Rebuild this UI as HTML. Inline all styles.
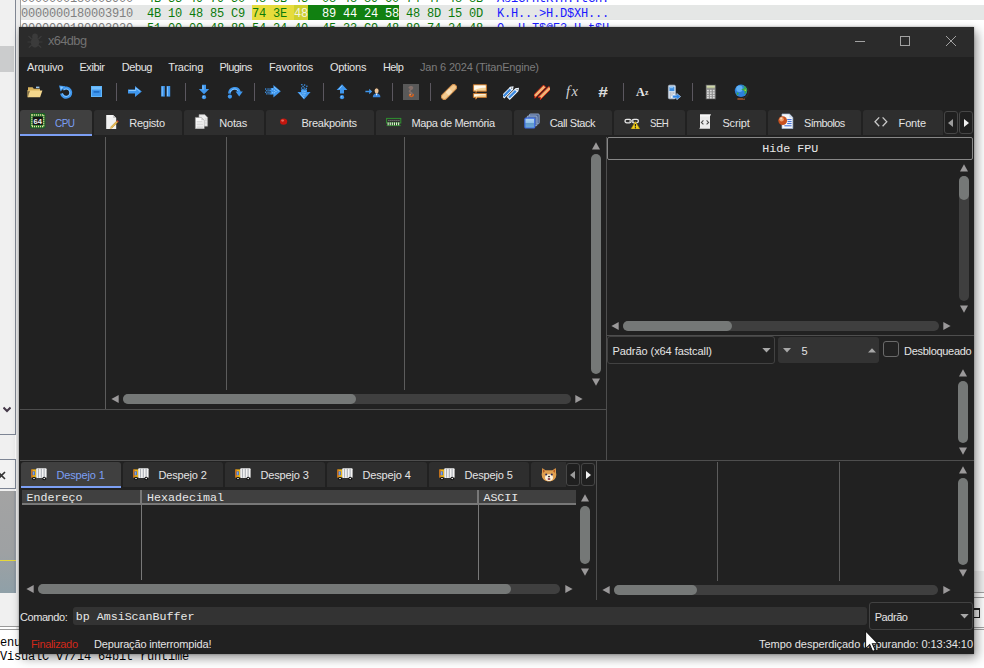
<!DOCTYPE html>
<html lang="pt"><head><meta charset="utf-8"><title>x64dbg</title>
<style>
html,body{margin:0;padding:0}
body{width:984px;height:668px;position:relative;overflow:hidden;background:#fff;font-family:"Liberation Sans",sans-serif}
.r{position:absolute;display:block;box-sizing:border-box}
.t{position:absolute;white-space:pre;line-height:16px;display:block}
</style></head><body>
<div class="r" style="left:0px;top:0px;width:15px;height:626px;background:#f0f0f0;"></div>
<div class="r" style="left:0px;top:46px;width:14px;height:26px;background:#cbcccd;"></div>
<div class="r" style="left:15px;top:0px;width:1px;height:435px;background:#808692;"></div>
<div class="r" style="left:16px;top:0px;width:4px;height:668px;background:#ececec;"></div>
<div class="r" style="left:20px;top:0px;width:1px;height:30px;background:#a0a0a0;"></div>
<div class="r" style="left:21px;top:5px;width:963px;height:15px;background:#e5e7e6;"></div>
<div class="r" style="left:252px;top:5px;width:42px;height:15px;background:#e6dc3c;"></div>
<div class="r" style="left:294px;top:5px;width:14px;height:15px;background:#ced02e;"></div>
<div class="r" style="left:308px;top:5px;width:91px;height:15px;background:#118011;"></div>
<span class="t" id="t0" style="left:21px;top:-9.19px;font-family:'Liberation Mono', monospace;font-size:12px;color:#808080;letter-spacing:-0.201px;">0000000180003900</span>
<span class="t" id="t1" style="left:147px;top:-9.19px;font-family:'Liberation Mono', monospace;font-size:12px;color:#0a7a0a;letter-spacing:-0.201px;">4B</span>
<span class="t" id="t2" style="left:168px;top:-9.19px;font-family:'Liberation Mono', monospace;font-size:12px;color:#0a7a0a;letter-spacing:-0.201px;">33</span>
<span class="t" id="t3" style="left:189px;top:-9.19px;font-family:'Liberation Mono', monospace;font-size:12px;color:#0a7a0a;letter-spacing:-0.201px;">49</span>
<span class="t" id="t4" style="left:210px;top:-9.19px;font-family:'Liberation Mono', monospace;font-size:12px;color:#0a7a0a;letter-spacing:-0.201px;">79</span>
<span class="t" id="t5" style="left:231px;top:-9.19px;font-family:'Liberation Mono', monospace;font-size:12px;color:#0a7a0a;letter-spacing:-0.201px;">50</span>
<span class="t" id="t6" style="left:252px;top:-9.19px;font-family:'Liberation Mono', monospace;font-size:12px;color:#0a7a0a;letter-spacing:-0.201px;">48</span>
<span class="t" id="t7" style="left:273px;top:-9.19px;font-family:'Liberation Mono', monospace;font-size:12px;color:#0a7a0a;letter-spacing:-0.201px;">8B</span>
<span class="t" id="t8" style="left:294px;top:-9.19px;font-family:'Liberation Mono', monospace;font-size:12px;color:#0a7a0a;letter-spacing:-0.201px;">43</span>
<span class="t" id="t9" style="left:322px;top:-9.19px;font-family:'Liberation Mono', monospace;font-size:12px;color:#0a7a0a;letter-spacing:-0.201px;">08</span>
<span class="t" id="t10" style="left:343px;top:-9.19px;font-family:'Liberation Mono', monospace;font-size:12px;color:#0a7a0a;letter-spacing:-0.201px;">48</span>
<span class="t" id="t11" style="left:364px;top:-9.19px;font-family:'Liberation Mono', monospace;font-size:12px;color:#0a7a0a;letter-spacing:-0.201px;">89</span>
<span class="t" id="t12" style="left:385px;top:-9.19px;font-family:'Liberation Mono', monospace;font-size:12px;color:#0a7a0a;letter-spacing:-0.201px;">C0</span>
<span class="t" id="t13" style="left:406px;top:-9.19px;font-family:'Liberation Mono', monospace;font-size:12px;color:#0a7a0a;letter-spacing:-0.201px;">74</span>
<span class="t" id="t14" style="left:427px;top:-9.19px;font-family:'Liberation Mono', monospace;font-size:12px;color:#0a7a0a;letter-spacing:-0.201px;">47</span>
<span class="t" id="t15" style="left:448px;top:-9.19px;font-family:'Liberation Mono', monospace;font-size:12px;color:#0a7a0a;letter-spacing:-0.201px;">48</span>
<span class="t" id="t16" style="left:469px;top:-9.19px;font-family:'Liberation Mono', monospace;font-size:12px;color:#0a7a0a;letter-spacing:-0.201px;">8B</span>
<span class="t" id="t17" style="left:497px;top:-9.19px;font-family:'Liberation Mono', monospace;font-size:12px;color:#1a1aff;letter-spacing:-0.201px;">AsiGrHtK.H..tGH.</span>
<span class="t" id="t18" style="left:21px;top:5.81px;font-family:'Liberation Mono', monospace;font-size:12px;color:#808080;letter-spacing:-0.201px;">0000000180003910</span>
<span class="t" id="t19" style="left:147px;top:5.81px;font-family:'Liberation Mono', monospace;font-size:12px;color:#0a7a0a;letter-spacing:-0.201px;">4B</span>
<span class="t" id="t20" style="left:168px;top:5.81px;font-family:'Liberation Mono', monospace;font-size:12px;color:#0a7a0a;letter-spacing:-0.201px;">10</span>
<span class="t" id="t21" style="left:189px;top:5.81px;font-family:'Liberation Mono', monospace;font-size:12px;color:#0a7a0a;letter-spacing:-0.201px;">48</span>
<span class="t" id="t22" style="left:210px;top:5.81px;font-family:'Liberation Mono', monospace;font-size:12px;color:#0a7a0a;letter-spacing:-0.201px;">85</span>
<span class="t" id="t23" style="left:231px;top:5.81px;font-family:'Liberation Mono', monospace;font-size:12px;color:#0a7a0a;letter-spacing:-0.201px;">C9</span>
<span class="t" id="t24" style="left:252px;top:5.81px;font-family:'Liberation Mono', monospace;font-size:12px;color:#0a7a0a;letter-spacing:-0.201px;">74</span>
<span class="t" id="t25" style="left:273px;top:5.81px;font-family:'Liberation Mono', monospace;font-size:12px;color:#0a7a0a;letter-spacing:-0.201px;">3E</span>
<span class="t" id="t26" style="left:294px;top:5.81px;font-family:'Liberation Mono', monospace;font-size:12px;color:#f4f4e0;letter-spacing:-0.201px;">48</span>
<span class="t" id="t27" style="left:322px;top:5.81px;font-family:'Liberation Mono', monospace;font-size:12px;color:#ffffff;letter-spacing:-0.201px;">89</span>
<span class="t" id="t28" style="left:343px;top:5.81px;font-family:'Liberation Mono', monospace;font-size:12px;color:#ffffff;letter-spacing:-0.201px;">44</span>
<span class="t" id="t29" style="left:364px;top:5.81px;font-family:'Liberation Mono', monospace;font-size:12px;color:#ffffff;letter-spacing:-0.201px;">24</span>
<span class="t" id="t30" style="left:385px;top:5.81px;font-family:'Liberation Mono', monospace;font-size:12px;color:#ffffff;letter-spacing:-0.201px;">58</span>
<span class="t" id="t31" style="left:406px;top:5.81px;font-family:'Liberation Mono', monospace;font-size:12px;color:#0a7a0a;letter-spacing:-0.201px;">48</span>
<span class="t" id="t32" style="left:427px;top:5.81px;font-family:'Liberation Mono', monospace;font-size:12px;color:#0a7a0a;letter-spacing:-0.201px;">8D</span>
<span class="t" id="t33" style="left:448px;top:5.81px;font-family:'Liberation Mono', monospace;font-size:12px;color:#0a7a0a;letter-spacing:-0.201px;">15</span>
<span class="t" id="t34" style="left:469px;top:5.81px;font-family:'Liberation Mono', monospace;font-size:12px;color:#0a7a0a;letter-spacing:-0.201px;">0D</span>
<span class="t" id="t35" style="left:497px;top:5.81px;font-family:'Liberation Mono', monospace;font-size:12px;color:#1a1aff;letter-spacing:-0.201px;">K.H...&gt;H.D$XH...</span>
<span class="t" id="t36" style="left:21px;top:20.81px;font-family:'Liberation Mono', monospace;font-size:12px;color:#808080;letter-spacing:-0.201px;">0000000180003920</span>
<span class="t" id="t37" style="left:147px;top:20.81px;font-family:'Liberation Mono', monospace;font-size:12px;color:#0a7a0a;letter-spacing:-0.201px;">51</span>
<span class="t" id="t38" style="left:168px;top:20.81px;font-family:'Liberation Mono', monospace;font-size:12px;color:#0a7a0a;letter-spacing:-0.201px;">00</span>
<span class="t" id="t39" style="left:189px;top:20.81px;font-family:'Liberation Mono', monospace;font-size:12px;color:#0a7a0a;letter-spacing:-0.201px;">00</span>
<span class="t" id="t40" style="left:210px;top:20.81px;font-family:'Liberation Mono', monospace;font-size:12px;color:#0a7a0a;letter-spacing:-0.201px;">48</span>
<span class="t" id="t41" style="left:231px;top:20.81px;font-family:'Liberation Mono', monospace;font-size:12px;color:#0a7a0a;letter-spacing:-0.201px;">89</span>
<span class="t" id="t42" style="left:252px;top:20.81px;font-family:'Liberation Mono', monospace;font-size:12px;color:#0a7a0a;letter-spacing:-0.201px;">54</span>
<span class="t" id="t43" style="left:273px;top:20.81px;font-family:'Liberation Mono', monospace;font-size:12px;color:#0a7a0a;letter-spacing:-0.201px;">24</span>
<span class="t" id="t44" style="left:294px;top:20.81px;font-family:'Liberation Mono', monospace;font-size:12px;color:#0a7a0a;letter-spacing:-0.201px;">40</span>
<span class="t" id="t45" style="left:322px;top:20.81px;font-family:'Liberation Mono', monospace;font-size:12px;color:#0a7a0a;letter-spacing:-0.201px;">45</span>
<span class="t" id="t46" style="left:343px;top:20.81px;font-family:'Liberation Mono', monospace;font-size:12px;color:#0a7a0a;letter-spacing:-0.201px;">33</span>
<span class="t" id="t47" style="left:364px;top:20.81px;font-family:'Liberation Mono', monospace;font-size:12px;color:#0a7a0a;letter-spacing:-0.201px;">C9</span>
<span class="t" id="t48" style="left:385px;top:20.81px;font-family:'Liberation Mono', monospace;font-size:12px;color:#0a7a0a;letter-spacing:-0.201px;">48</span>
<span class="t" id="t49" style="left:406px;top:20.81px;font-family:'Liberation Mono', monospace;font-size:12px;color:#0a7a0a;letter-spacing:-0.201px;">89</span>
<span class="t" id="t50" style="left:427px;top:20.81px;font-family:'Liberation Mono', monospace;font-size:12px;color:#0a7a0a;letter-spacing:-0.201px;">74</span>
<span class="t" id="t51" style="left:448px;top:20.81px;font-family:'Liberation Mono', monospace;font-size:12px;color:#0a7a0a;letter-spacing:-0.201px;">24</span>
<span class="t" id="t52" style="left:469px;top:20.81px;font-family:'Liberation Mono', monospace;font-size:12px;color:#0a7a0a;letter-spacing:-0.201px;">48</span>
<span class="t" id="t53" style="left:497px;top:20.81px;font-family:'Liberation Mono', monospace;font-size:12px;color:#1a1aff;letter-spacing:-0.201px;">Q..H.T$@E3.H.t$H</span>
<svg class="r" style="left:3px;top:405.5px;" width="8" height="8" viewBox="0 0 8 8"><path d="M0.5 1.5L4 5l3.5-3.5" fill="none" stroke="#443848" stroke-width="2"/></svg>
<div class="r" style="left:0px;top:420px;width:16px;height:15px;background:transparent;border-right:1px solid #7d8594;border-bottom:1px solid #7d8594"></div>
<div class="r" style="left:-2px;top:459px;width:18px;height:30px;background:#f2f2f2;border:1px solid #7d8594"></div>
<svg class="r" style="left:-3px;top:470.5px;" width="9" height="9" viewBox="0 0 9 9"><path d="M1 1l7 7M8 1l-7 7" stroke="#333" stroke-width="1.6"/></svg>
<div class="r" style="left:0px;top:491px;width:16px;height:102px;background:linear-gradient(180deg,#a3a3a3 0%,#9ea1a3 60%,#8fa0a8 100%);"></div>
<div class="r" style="left:14px;top:491px;width:2px;height:102px;background:rgba(120,130,150,.25);"></div>
<div class="r" style="left:0px;top:560px;width:16px;height:1px;background:#e6d83a;"></div>
<div class="r" style="left:0px;top:593px;width:20px;height:33px;background:#f0f0f0;"></div>
<div class="r" style="left:0px;top:626px;width:20px;height:1px;background:#9a9a9a;"></div>
<div class="r" style="left:0px;top:629px;width:20px;height:1px;background:#9a9a9a;"></div>
<div class="r" style="left:0px;top:630px;width:20px;height:38px;background:#ffffff;"></div>
<span class="t" id="t54" style="left:0px;top:634.81px;font-family:'Liberation Mono', monospace;font-size:12px;color:#000;letter-spacing:-0.201px;">enu</span>
<span class="t" id="t55" style="left:0px;top:648.81px;font-family:'Liberation Mono', monospace;font-size:12px;color:#000;letter-spacing:-0.201px;">VisualC v7/14 64bit runtime</span>
<div class="r" style="left:974px;top:571px;width:10px;height:21px;background:#f0f0f0;"></div>
<div class="r" style="left:974px;top:592px;width:10px;height:1px;background:#a3a3a3;"></div>
<div class="r" style="left:974px;top:597px;width:10px;height:1px;background:#a3a3a3;"></div>
<div class="r" style="left:974px;top:627px;width:10px;height:1px;background:#a3a3a3;"></div>
<div class="r" style="left:974px;top:629px;width:10px;height:1px;background:#a3a3a3;"></div>
<div class="r" style="left:974px;top:608px;width:6px;height:10px;background:#f0f0f0;border:1px solid #222;border-top:2px solid #222;border-left:none"></div>
<div class="r" id="win" style="left:19px;top:27px;width:955px;height:627px;background:#212121;box-shadow:3px 4px 10px rgba(0,0,0,.42),0 0 2px rgba(0,0,0,.35)"></div>
<div class="r" style="left:19px;top:27px;width:955px;height:30px;background:#2b2b2b;"></div>
<svg class="r" style="left:27px;top:33px;" width="16" height="15" viewBox="0 0 16 15"><g fill="#3b3b3b" stroke="#3b3b3b"><ellipse cx="8" cy="9.2" rx="4.2" ry="5.2" stroke="none"/><circle cx="8" cy="3.4" r="2.8" stroke="none"/><path d="M4.5 6L1.5 3M11.5 6l3-3M4.4 9H0.5M11.6 9h3.9M4.8 12l-3 2.6M11.2 12l3 2.6" fill="none" stroke-width="1.2"/></g></svg>
<span class="t" id="t56" style="left:48px;top:33.49px;font-family:'Liberation Sans', sans-serif;font-size:13px;color:#727272;letter-spacing:-0.600px;transform:scaleX(0.9835);transform-origin:0 0;">x64dbg</span>
<svg class="r" style="left:855px;top:36px;" width="110" height="11" viewBox="0 0 110 11"><g fill="none" stroke="#a2a2a2" stroke-width="1"><path d="M0 5.5h10"/><rect x="45.5" y="0.5" width="9" height="9"/><path d="M91 0l10 10M101 0l-10 10"/></g></svg>
<span class="t" id="t57" style="left:27px;top:59.19px;font-family:'Liberation Sans', sans-serif;font-size:11px;color:#e4e4e4;letter-spacing:-0.149px;">Arquivo</span>
<span class="t" id="t58" style="left:79.4px;top:59.19px;font-family:'Liberation Sans', sans-serif;font-size:11px;color:#e4e4e4;letter-spacing:-0.403px;">Exibir</span>
<span class="t" id="t59" style="left:121.7px;top:59.19px;font-family:'Liberation Sans', sans-serif;font-size:11px;color:#e4e4e4;letter-spacing:-0.405px;">Debug</span>
<span class="t" id="t60" style="left:168.3px;top:59.19px;font-family:'Liberation Sans', sans-serif;font-size:11px;color:#e4e4e4;letter-spacing:-0.214px;">Tracing</span>
<span class="t" id="t61" style="left:219.5px;top:59.19px;font-family:'Liberation Sans', sans-serif;font-size:11px;color:#e4e4e4;letter-spacing:-0.563px;">Plugins</span>
<span class="t" id="t62" style="left:268.9px;top:59.19px;font-family:'Liberation Sans', sans-serif;font-size:11px;color:#e4e4e4;letter-spacing:-0.119px;">Favoritos</span>
<span class="t" id="t63" style="left:329.9px;top:59.19px;font-family:'Liberation Sans', sans-serif;font-size:11px;color:#e4e4e4;letter-spacing:-0.237px;">Options</span>
<span class="t" id="t64" style="left:382.5px;top:59.19px;font-family:'Liberation Sans', sans-serif;font-size:11px;color:#e4e4e4;letter-spacing:-0.600px;transform:scaleX(0.9988);transform-origin:0 0;">Help</span>
<span class="t" id="t65" style="left:420px;top:59.19px;font-family:'Liberation Sans', sans-serif;font-size:11px;color:#7c7c7c;letter-spacing:-0.179px;">Jan 6 2024 (TitanEngine)</span>
<div class="r" style="left:116px;top:83px;width:1px;height:18px;background:#5b575f;"></div>
<div class="r" style="left:185px;top:83px;width:1px;height:18px;background:#5b575f;"></div>
<div class="r" style="left:254px;top:83px;width:1px;height:18px;background:#5b575f;"></div>
<div class="r" style="left:323px;top:83px;width:1px;height:18px;background:#5b575f;"></div>
<div class="r" style="left:392px;top:83px;width:1px;height:18px;background:#5b575f;"></div>
<div class="r" style="left:430px;top:83px;width:1px;height:18px;background:#5b575f;"></div>
<div class="r" style="left:623px;top:83px;width:1px;height:18px;background:#5b575f;"></div>
<div class="r" style="left:692px;top:83px;width:1px;height:18px;background:#5b575f;"></div>
<svg class="r" style="left:27px;top:84px;" width="16" height="16" viewBox="0 0 16 16"><path d="M1 3.2h4.6l1.2 1.6H13v2.4H1z" fill="#d9b45e"/><path d="M9 2.6h3.4v1.6H9z" fill="#9fc6ec"/><path d="M2.8 6.6H15.4l-2.3 6.6H0.8z" fill="#f3d68c"/><path d="M1 6v7.2" stroke="#e6c473" stroke-width="1"/></svg>
<svg class="r" style="left:58px;top:84px;" width="16" height="16" viewBox="0 0 16 16"><path d="M5 5.300A4.600 4.600 0 1 1 3.600 9.400" fill="none" stroke="#3f97ee" stroke-width="3"/><path d="M5.600 5.900A3.800 3.800 0 1 1 4.400 9.400" fill="none" stroke="#8ccaff" stroke-width="0.900"/><path d="M1 1.400l6.600 0.800-5 5.400z" fill="#3f97ee"/><path d="M2.200 2.600l3.200 0.400-2.600 2.800z" fill="#8ccaff"/></svg>
<svg class="r" style="left:89px;top:84px;" width="16" height="16" viewBox="0 0 16 16"><rect x="2.5" y="2.5" width="10" height="10" fill="#3f97ee" stroke="#5fb6fc" stroke-width="1"/><rect x="3" y="3" width="9" height="2.6" fill="#74c0ff"/><rect x="4.6" y="7" width="5.800" height="1.800" fill="#1f6fc8"/></svg>
<svg class="r" style="left:127px;top:84px;" width="16" height="16" viewBox="0 0 16 16"><path d="M1 5.600h7V2l6.800 5.500L8 13V9.400H1z" fill="#3f97ee"/><path d="M1.800 6.500h7V4l4.200 3.400" fill="none" stroke="#8ccaff" stroke-width="1"/></svg>
<svg class="r" style="left:158px;top:84px;" width="16" height="16" viewBox="0 0 16 16"><rect x="3.200" y="2" width="3.600" height="10.600" fill="#3f97ee"/><rect x="8.600" y="2" width="3.600" height="10.600" fill="#3f97ee"/><path d="M4.200 2.600v9.400M9.600 2.600v9.400" stroke="#8ccaff" stroke-width="0.900"/></svg>
<svg class="r" style="left:196px;top:84px;" width="16" height="16" viewBox="0 0 16 16"><path d="M6 0.800h4v4.200h3.200L8 10.200 2.800 5H6z" fill="#3f97ee"/><path d="M7 1.600v4.200" stroke="#8ccaff"/><circle cx="8" cy="13.200" r="2.100" fill="#3f97ee"/><circle cx="7.600" cy="12.800" r="0.800" fill="#8ccaff"/></svg>
<svg class="r" style="left:227px;top:84px;" width="16" height="16" viewBox="0 0 16 16"><path d="M2.400 9.600C2.800 3.600 11 2.400 12.400 8.200" fill="none" stroke="#3f97ee" stroke-width="2.800"/><path d="M8.600 7.600h7.200l-3.600 5z" fill="#3f97ee"/><circle cx="2.900" cy="12.600" r="2.100" fill="#3f97ee"/><path d="M3.400 8C4.600 4.400 9.600 4 11 7" fill="none" stroke="#8ccaff" stroke-width="0.900"/></svg>
<svg class="r" style="left:265px;top:84px;" width="16" height="16" viewBox="0 0 16 16"><path d="M8.400 1l7.400 6.200-7.400 6.200V10.400H6V4h2.400z" fill="#3f97ee"/><path d="M9.200 3.200l4.800 4" stroke="#8ccaff" stroke-width="1" fill="none"/><g fill="#3f97ee"><rect x="0" y="4.4" width="1.3" height="1.3"/><rect x="2.4" y="4.4" width="1.3" height="1.3"/><rect x="4.4" y="4.4" width="1.3" height="1.3"/><rect x="1.2" y="6" width="1.3" height="1.3"/><rect x="3.4" y="6" width="1.3" height="1.3"/><rect x="5" y="6" width="1.3" height="1.3"/><rect x="0" y="7.6" width="1.3" height="1.3"/><rect x="2.4" y="7.6" width="1.3" height="1.3"/><rect x="4.4" y="7.6" width="1.3" height="1.3"/><rect x="1.2" y="9.2" width="1.3" height="1.3"/><rect x="3.4" y="9.2" width="1.3" height="1.3"/><rect x="5" y="9.2" width="1.3" height="1.3"/><rect x="6.4" y="5.2" width="1.3" height="1.3"/><rect x="6.4" y="7.4" width="1.3" height="1.3"/><rect x="7.8" y="6.4" width="1.3" height="1.3"/></g><g fill="#8ccaff"><rect x="7" y="4.6" width="1.1" height="1.1"/><rect x="8.8" y="5.8" width="1.1" height="1.1"/><rect x="7" y="8.2" width="1.1" height="1.1"/><rect x="8.8" y="8.2" width="1.1" height="1.1"/><rect x="10.4" y="7" width="1.1" height="1.1"/></g></svg>
<svg class="r" style="left:296px;top:84px;" width="16" height="16" viewBox="0 0 16 16"><path d="M1.400 8h3.600V5.600h6V8h3.600L8 15.600z" fill="#3f97ee"/><path d="M3.600 9l4.400 5" stroke="#8ccaff" stroke-width="1" fill="none"/><g fill="#3f97ee"><rect x="5.2" y="0" width="1.3" height="1.3"/><rect x="8" y="0.4" width="1.3" height="1.3"/><rect x="10.2" y="1.6" width="1.3" height="1.3"/><rect x="6.4" y="1.8" width="1.3" height="1.3"/><rect x="5" y="3.4" width="1.3" height="1.3"/><rect x="7.6" y="3.4" width="1.3" height="1.3"/><rect x="9.6" y="3.8" width="1.3" height="1.3"/><rect x="6.2" y="5" width="1.3" height="1.3"/><rect x="8.6" y="5.4" width="1.3" height="1.3"/></g><g fill="#8ccaff"><rect x="6.4" y="6.6" width="1.1" height="1.1"/><rect x="8.4" y="7" width="1.1" height="1.1"/><rect x="6.4" y="8.6" width="1.1" height="1.1"/><rect x="8.4" y="9" width="1.1" height="1.1"/><rect x="7.4" y="10.6" width="1.1" height="1.1"/></g></svg>
<svg class="r" style="left:334px;top:84px;" width="16" height="16" viewBox="0 0 16 16"><path d="M8 0.200l5.400 5.800H10v3.400H6V6H2.600z" fill="#3f97ee"/><path d="M8 1.800L5 5.200" stroke="#8ccaff"/><circle cx="8" cy="13.200" r="2.100" fill="#3f97ee"/><circle cx="7.600" cy="12.800" r="0.800" fill="#8ccaff"/></svg>
<svg class="r" style="left:365px;top:84px;" width="16" height="16" viewBox="0 0 16 16"><path d="M0.400 6.800h3.800V4.800l3 2.700-3 2.700V8.200H0.400z" fill="#3f97ee"/><ellipse cx="11.600" cy="6.800" rx="2" ry="2.600" fill="#eac49a"/><path d="M9.600 6a2 2.400 0 0 1 4 0l-0.400-1.600-1.600-0.600-1.600 0.600z" fill="#4a3020"/><path d="M7.800 13.200c0-2.600 1.400-3.800 3.800-3.800s3.800 1.200 3.800 3.800z" fill="#3a86dc"/><path d="M10.600 9.400l1 2.400 1-2.400z" fill="#fff"/></svg>
<svg class="r" style="left:403px;top:84px;" width="16" height="16" viewBox="0 0 16 16"><rect x="0" y="0" width="16" height="16" fill="#595959"/><path d="M5.400 3.600c0.400-1.400 2-2 3.400-1.600 1.400 0.400 1.800 1.800 1.200 2.800-0.400 0.800-1.400 1-2.200 1.600-0.600 0.600 0.200 1.200 0.800 1.600 1 0.600 1.400 1.600 1.200 2.600l-1.600-0.200c0-0.800-0.600-1.200-1.400-1.600-1-0.600-1.400-1.600-0.800-2.600 0.400-0.600 1-1 1.400-1.400-0.800 0.200-1.800-0.200-2-1.200z" fill="#85706a"/><path d="M6.400 10.600c0.200 1.400 1.400 2.200 2.600 1.800 1-0.400 1.400-1.400 1-2.400" fill="none" stroke="#d4611e" stroke-width="1.500"/><circle cx="7.200" cy="10.400" r="0.900" fill="#e89050"/></svg>
<svg class="r" style="left:441px;top:84px;" width="16" height="16" viewBox="0 0 16 16"><g transform="rotate(-45 8 8)"><rect x="-1.400" y="5.200" width="18.800" height="5.600" rx="2.800" fill="#f3c98e" stroke="#d18f4c" stroke-width="1"/><rect x="5.400" y="5.800" width="5.200" height="4.400" fill="#f9dfb8"/></g></svg>
<svg class="r" style="left:472px;top:84px;" width="16" height="16" viewBox="0 0 16 16"><path d="M1.400 0.800h13v6.400H5.400l-1.600 1.400V7.200H1.400z" fill="#f5d49a" stroke="#c4742a" stroke-width="1"/><path d="M2.200 1.600h11.400v2.200c-4 0-7.600 0.400-11.400 2.400z" fill="#fffaf0"/><path d="M1.400 9.600h13v3.800H5.400l-1.600 1.800v-1.800H1.400z" fill="#f5d49a" stroke="#c4742a" stroke-width="1"/><path d="M2.200 10.200h11.400v0.800c-4 0-7.600 0.400-11.400 1.600z" fill="#fffaf0"/></svg>
<svg class="r" style="left:503px;top:84px;" width="16" height="16" viewBox="0 0 16 16"><g transform="rotate(-45 8 8)"><path d="M-0.800 4.200h11.600l2.200 1.600-2.200 1.600H-0.800z" fill="#3a8ae2" stroke="#eef5fd" stroke-width="1"/><path d="M9.400 4.200h1.400l2.200 1.600-2.200 1.600H9.400z" fill="#eef5fd"/><circle cx="11.200" cy="5.800" r="0.600" fill="#555"/><path d="M2 9h11.600l2.200 1.600-2.200 1.600H2z" fill="#3a8ae2" stroke="#eef5fd" stroke-width="1"/><path d="M12.200 9h1.400l2.200 1.600-2.200 1.600h-1.400z" fill="#eef5fd"/><circle cx="14" cy="10.600" r="0.600" fill="#555"/></g></svg>
<svg class="r" style="left:534px;top:84px;" width="16" height="16" viewBox="0 0 16 16"><g transform="rotate(-45 8 8)"><path d="M-1.400 4.200h15.400v3.200H-1.400l1.600-1.600z" fill="#f1b476" stroke="#d3230f" stroke-width="0.900"/><path d="M1.400 9h15.400v3.200H1.400l1.600-1.600z" fill="#f1b476" stroke="#d3230f" stroke-width="0.900"/></g></svg>
<svg class="r" style="left:665px;top:84px;" width="16" height="16" viewBox="0 0 16 16"><rect x="3.400" y="1.200" width="7" height="13.600" rx="1.200" fill="#e9eef4" stroke="#a9b9cc" stroke-width="0.800"/><rect x="4.400" y="2.600" width="5" height="4.600" fill="#3f8fe2"/><rect x="4.800" y="3" width="3.400" height="1.200" fill="#8ec6fa"/><g fill="#8a98aa"><rect x="4.600" y="8.400" width="1.200" height="1.200"/><rect x="6.400" y="8.400" width="1.200" height="1.200"/><rect x="8.200" y="8.400" width="1.200" height="1.200"/><rect x="4.600" y="10.400" width="1.200" height="1.200"/><rect x="6.400" y="10.400" width="1.200" height="1.200"/><rect x="4.600" y="12.400" width="1.200" height="1.200"/></g><path d="M7.600 11.200h4.200V9.400l3.800 3.200-3.800 3.200v-1.800H7.600z" fill="#2f86e6" stroke="#cfe6ff" stroke-width="0.600"/></svg>
<svg class="r" style="left:703px;top:84px;" width="16" height="16" viewBox="0 0 16 16"><rect x="2.600" y="0.600" width="10.400" height="14.800" rx="1" fill="#8d8d8d" stroke="#2b2b2b" stroke-width="1"/><rect x="3.800" y="1.800" width="8" height="2.400" fill="#b9c39a"/><path d="M3.800 2.200h8" stroke="#dfe6b8" stroke-width="0.800"/><g fill="#dcdcdc"><rect x="4" y="5.800" width="1.800" height="1.600"/><rect x="6.900" y="5.800" width="1.800" height="1.600"/><rect x="9.800" y="5.800" width="1.800" height="1.600"/><rect x="4" y="8.300" width="1.800" height="1.600"/><rect x="6.900" y="8.300" width="1.800" height="1.600"/><rect x="9.800" y="8.300" width="1.800" height="1.600"/><rect x="4" y="10.800" width="1.800" height="1.600"/><rect x="6.900" y="10.800" width="1.800" height="1.600"/><rect x="9.800" y="10.800" width="1.800" height="1.600"/><rect x="4" y="13" width="1.800" height="1.400"/><rect x="6.900" y="13" width="1.800" height="1.400"/><rect x="9.800" y="13" width="1.800" height="1.400"/></g></svg>
<svg class="r" style="left:734px;top:84px;" width="16" height="16" viewBox="0 0 16 16"><path d="M3.400 15h7.600" stroke="#b05a2a" stroke-width="1.400"/><path d="M12.400 2.200A7 7 0 0 1 9 14.200" fill="none" stroke="#2c2c2c" stroke-width="1.400"/><circle cx="7" cy="6.800" r="6.200" fill="#2c80dc"/><circle cx="5.400" cy="4.800" r="3.200" fill="#5fb0f4"/><path d="M7.400 1.400c2 0.600 3.400 1.400 2.600 2.800-0.800 0.800-2 0.200-2.600 1.400 0.800 1 2.600 0.600 3.200 2 0.400 1.200-0.400 2.400-1 3 2.200-0.600 3.600-2.400 3.600-4.600-0.400-2.600-2.400-4.600-5.800-4.600z" fill="#3aa84a"/><path d="M2.600 8.600c0.800-0.400 1.800 0 2.200 1-0.200 0.800-1 1.200-1 2-0.800-0.800-1.200-1.800-1.200-3z" fill="#3aa84a"/><circle cx="11.200" cy="6.200" r="0.700" fill="#e8d23a"/></svg>
<span class="t" id="t66" style="left:566px;top:82.91px;font-family:'Liberation Serif', serif;font-size:14.5px;color:#d4d4d4;letter-spacing:0.000px;font-style:italic;">f</span>
<span class="t" id="t67" style="left:571.6px;top:82.91px;font-family:'Liberation Serif', serif;font-size:14.5px;color:#d4d4d4;letter-spacing:0.000px;font-style:italic;">x</span>
<span class="t" id="t68" style="left:598.2px;top:84.35px;font-family:'Liberation Sans', sans-serif;font-size:14px;color:#dcdcdc;letter-spacing:0.000px;font-weight:bold;font-style:italic;transform:scaleX(1.25);transform-origin:0 0;">#</span>
<span class="t" id="t69" style="left:636px;top:83.88px;font-family:'Liberation Serif', serif;font-size:12.2px;color:#e6e6e6;letter-spacing:0.000px;font-weight:bold;">A</span>
<span class="t" id="t70" style="left:645px;top:85.44px;font-family:'Liberation Serif', serif;font-size:7.6px;color:#e6e6e6;letter-spacing:0.000px;font-weight:bold;">z</span>
<div class="r" style="left:20px;top:110px;width:72px;height:26px;background:#404040;border-radius:3px 3px 0 0"></div>
<div class="r" style="left:20px;top:134px;width:72px;height:2px;background:#7c9ff4;"></div>
<svg class="r" style="left:30px;top:113px;" width="16" height="16" viewBox="0 0 16 16"><rect x="0.500" y="0.500" width="14.500" height="14.500" rx="1" fill="#2a7a32" stroke="#1a5a22"/><rect x="1.900" y="1.900" width="11.700" height="11.700" fill="none" stroke="#ece2a0" stroke-width="1.500" stroke-dasharray="1 1"/><rect x="2.800" y="3.600" width="10" height="8.400" fill="#161616"/><text x="3.600" y="10.500" font-family="Liberation Sans,sans-serif" font-weight="bold" font-size="7.200" fill="#f4f4f4" textLength="8.400" lengthAdjust="spacingAndGlyphs">64</text></svg>
<span class="t" id="t71" style="left:55.3px;top:115.19px;font-family:'Liberation Sans', sans-serif;font-size:11px;color:#7c9ff4;letter-spacing:-0.600px;transform:scaleX(0.9031);transform-origin:0 0;">CPU</span>
<div class="r" style="left:94px;top:110px;width:88px;height:25px;background:#2e2e2e;border-radius:3px 3px 0 0"></div>
<svg class="r" style="left:104px;top:113px;" width="16" height="16" viewBox="0 0 16 16"><path d="M2.200 2h7l3 3V16H2.200z" fill="#f1f1f1"/><path d="M9.200 2v3h3z" fill="#c4c4c4"/><path d="M3.200 3h5" stroke="#ffffff"/><path d="M6.200 15.800l0.500-1.800 5.900-5.900 1.200 1.200-5.900 5.900z" fill="#e6b94e" stroke="#a87622" stroke-width="0.400"/><path d="M12.600 8.100l0.900-0.900 1.200 1.200-0.900 0.900z" fill="#de4436"/><path d="M6.200 15.800l0.500-1.800 1.200 1.200z" fill="#f3e0b8"/></svg>
<span class="t" id="t72" style="left:129.3px;top:115.19px;font-family:'Liberation Sans', sans-serif;font-size:11px;color:#e4e4e4;letter-spacing:-0.266px;">Registo</span>
<div class="r" style="left:184px;top:110px;width:80px;height:25px;background:#2e2e2e;border-radius:3px 3px 0 0"></div>
<svg class="r" style="left:194px;top:113px;" width="16" height="16" viewBox="0 0 16 16"><path d="M5 1.600h5.800L13.600 4.400v8.800H5z" fill="#efefef" stroke="#9a9a9a" stroke-width="0.600"/><path d="M1.400 4.400h6l2.800 2.800v8.600H1.400z" fill="#fcfcfc" stroke="#9a9a9a" stroke-width="0.600"/><path d="M7.400 4.400v2.800h2.800z" fill="#d0d0d0"/><g stroke="#c6c6c6" stroke-width="0.700"><path d="M2.600 8.400h6M2.600 10h6.400M2.600 11.600h6.400M2.600 13.200h6.400M2.600 14.600h6.400"/><path d="M10.800 6h2M11 7.600h1.800M11 9.200h1.800M11 10.800h1.800"/></g></svg>
<span class="t" id="t73" style="left:219.3px;top:115.19px;font-family:'Liberation Sans', sans-serif;font-size:11px;color:#e4e4e4;letter-spacing:-0.188px;">Notas</span>
<div class="r" style="left:266px;top:110px;width:108px;height:25px;background:#2e2e2e;border-radius:3px 3px 0 0"></div>
<svg class="r" style="left:276px;top:113px;" width="16" height="16" viewBox="0 0 16 16"><ellipse cx="7.600" cy="8.600" rx="3.600" ry="3.200" fill="#c2160e"/><ellipse cx="6.600" cy="7.600" rx="1.500" ry="1.100" fill="#e8685a"/></svg>
<span class="t" id="t74" style="left:301.5px;top:115.19px;font-family:'Liberation Sans', sans-serif;font-size:11px;color:#e4e4e4;letter-spacing:-0.259px;">Breakpoints</span>
<div class="r" style="left:376px;top:110px;width:136px;height:25px;background:#2e2e2e;border-radius:3px 3px 0 0"></div>
<svg class="r" style="left:386px;top:113px;" width="16" height="16" viewBox="0 0 16 16"><rect x="0.600" y="5.400" width="14.200" height="4.600" fill="#303030" stroke="#2f9030" stroke-width="1"/><g fill="#8a8a8a"><rect x="2.400" y="7" width="1" height="1"/><rect x="4.400" y="7" width="1" height="1"/><rect x="6.400" y="7" width="1" height="1"/><rect x="8.400" y="7" width="1" height="1"/><rect x="10.400" y="7" width="1" height="1"/><rect x="12.400" y="7" width="1" height="1"/></g><g fill="#dff4d0"><rect x="1.600" y="9.400" width="1.100" height="3.400"/><rect x="3.700" y="9.400" width="1.100" height="3.400"/><rect x="5.800" y="9.400" width="1.100" height="3.400"/><rect x="7.900" y="9.400" width="1.100" height="3.400"/><rect x="10" y="9.400" width="1.100" height="3.400"/><rect x="12.100" y="9.400" width="1.100" height="3.400"/></g><path d="M0.600 12.600h14.200" stroke="#2f9030" stroke-width="0.800"/></svg>
<span class="t" id="t75" style="left:411.5px;top:115.19px;font-family:'Liberation Sans', sans-serif;font-size:11px;color:#e4e4e4;letter-spacing:-0.368px;">Mapa de Memória</span>
<div class="r" style="left:514px;top:110px;width:98px;height:25px;background:#2e2e2e;border-radius:3px 3px 0 0"></div>
<svg class="r" style="left:524px;top:113px;" width="16" height="16" viewBox="0 0 16 16"><defs><linearGradient id="gs" x1="0" y1="0" x2="0" y2="1"><stop offset="0" stop-color="#b4d6f2"/><stop offset="0.500" stop-color="#8fbfe6"/><stop offset="0.520" stop-color="#5f9acb"/><stop offset="1" stop-color="#6fa8d6"/></linearGradient></defs><rect x="5.400" y="1" width="9.800" height="9.800" rx="1" fill="#4a628c" stroke="#93a9cf" stroke-width="0.900"/><rect x="3.200" y="3" width="9.800" height="9.800" rx="1" fill="#566f9c" stroke="#9fb5da" stroke-width="0.900"/><rect x="0.900" y="5.200" width="9.800" height="9.800" rx="1" fill="url(#gs)" stroke="#3f6fe6" stroke-width="1.200"/></svg>
<span class="t" id="t76" style="left:549.8px;top:115.19px;font-family:'Liberation Sans', sans-serif;font-size:11px;color:#e4e4e4;letter-spacing:-0.415px;">Call Stack</span>
<div class="r" style="left:614px;top:110px;width:71px;height:25px;background:#2e2e2e;border-radius:3px 3px 0 0"></div>
<svg class="r" style="left:624px;top:113px;" width="16" height="16" viewBox="0 0 16 16"><g fill="none" stroke="#e6e6e6" stroke-width="1.300"><rect x="1" y="6.400" width="6.200" height="3.400" rx="1.700"/><rect x="8.200" y="6.400" width="6.200" height="3.400" rx="1.700"/></g><path d="M5 8.100h5" stroke="#a9a9a9" stroke-width="1.300"/><path d="M11.400 8.600l4.400 7.400H7z" fill="#f4d21e" stroke="#a8860a" stroke-width="0.600"/><path d="M11.400 11v2.600" stroke="#222" stroke-width="1.200"/><circle cx="11.400" cy="14.700" r="0.700" fill="#222"/></svg>
<span class="t" id="t77" style="left:649.5px;top:115.19px;font-family:'Liberation Sans', sans-serif;font-size:11px;color:#e4e4e4;letter-spacing:-0.600px;transform:scaleX(0.8728);transform-origin:0 0;">SEH</span>
<div class="r" style="left:687px;top:110px;width:79px;height:25px;background:#2e2e2e;border-radius:3px 3px 0 0"></div>
<svg class="r" style="left:697px;top:113px;" width="16" height="16" viewBox="0 0 16 16"><path d="M3 1.400h11c-0.800 0.400-1 1.400-1 2.200V15.800H2c0.800-0.400 1-1.200 1-2z" fill="#ececec"/><path d="M3 1.400h11c-0.800 0.400-1 1.400-1 2.200H3z" fill="#fafafa"/><path d="M6.400 7.400L4.400 9.400l2 2M9.600 7.400l2 2-2 2" fill="none" stroke="#4a4a4a" stroke-width="1.100"/></svg>
<span class="t" id="t78" style="left:722.4px;top:115.19px;font-family:'Liberation Sans', sans-serif;font-size:11px;color:#e4e4e4;letter-spacing:-0.145px;">Script</span>
<div class="r" style="left:768px;top:110px;width:93px;height:25px;background:#2e2e2e;border-radius:3px 3px 0 0"></div>
<svg class="r" style="left:778px;top:113px;" width="16" height="16" viewBox="0 0 16 16"><path d="M4 1h7.400l3.400 3.400v11.200H4z" fill="#f6f8fb" stroke="#a9bfdc" stroke-width="0.700"/><path d="M11.400 1v3.400h3.400z" fill="#c9d8ec"/><g stroke="#3466d4" stroke-width="1"><path d="M9.200 6.600h4.400M9.600 8.600h4M9.200 10.600h4.400M6.400 12.800h7.200"/></g><circle cx="4.700" cy="7.600" r="4.400" fill="#c7501e"/><circle cx="3.600" cy="6.200" r="2.200" fill="#eea070"/><circle cx="3.200" cy="5.600" r="1" fill="#fbd8b8"/></svg>
<span class="t" id="t79" style="left:803.5px;top:115.19px;font-family:'Liberation Sans', sans-serif;font-size:11px;color:#e4e4e4;letter-spacing:-0.600px;transform:scaleX(0.9866);transform-origin:0 0;">Símbolos</span>
<div class="r" style="left:863px;top:110px;width:80px;height:25px;background:#2e2e2e;border-radius:3px 3px 0 0"></div>
<svg class="r" style="left:873px;top:113px;" width="16" height="16" viewBox="0 0 16 16"><path d="M6.200 4.400L2 8.800l4.200 4.400M9.600 4.400l4.200 4.400-4.200 4.400" fill="none" stroke="#c8c8c8" stroke-width="1.300"/></svg>
<span class="t" id="t80" style="left:898.6px;top:115.19px;font-family:'Liberation Sans', sans-serif;font-size:11px;color:#e4e4e4;letter-spacing:-0.160px;">Fonte</span>
<div class="r" style="left:944px;top:111px;width:14px;height:23px;background:#1f1f1f;border:1px solid #464646;border-radius:3px"></div>
<svg class="r" style="left:948px;top:118.5px;" width="5" height="8" viewBox="0 0 5 8"><path d="M5 0L0 4l5 4z" fill="#9c9c9c"/></svg>
<div class="r" style="left:959px;top:111px;width:14px;height:23px;background:#1f1f1f;border:1px solid #464646;border-radius:3px"></div>
<svg class="r" style="left:964px;top:118.5px;" width="5" height="8" viewBox="0 0 5 8"><path d="M0 0l5 4-5 4z" fill="#f0f0f0"/></svg>
<div class="r" style="left:105px;top:137px;width:1px;height:272px;background:#5c5c5c;"></div>
<div class="r" style="left:226px;top:137px;width:1px;height:253px;background:#5c5c5c;"></div>
<div class="r" style="left:404px;top:137px;width:1px;height:253px;background:#5c5c5c;"></div>
<svg class="r" style="left:592px;top:142px;" width="8" height="8" viewBox="0 0 8 8"><path d="M4 0.3L0 7.5h8z" fill="#9b999a"/></svg>
<div class="r" style="left:591px;top:154px;width:10px;height:220px;background:#757877;border-radius:5px"></div>
<svg class="r" style="left:592px;top:378px;" width="8" height="8" viewBox="0 0 8 8"><path d="M0 0.5h8L4 7.7z" fill="#9b999a"/></svg>
<svg class="r" style="left:111px;top:395px;" width="8" height="8" viewBox="0 0 8 8"><path d="M7.7 0v8L0.4 4z" fill="#9b999a"/></svg>
<div class="r" style="left:123px;top:394px;width:448px;height:10px;background:#3f3f3f;border-radius:5px"></div>
<div class="r" style="left:123px;top:394px;width:233px;height:10px;background:#757877;border-radius:5px"></div>
<svg class="r" style="left:575px;top:395px;" width="8" height="8" viewBox="0 0 8 8"><path d="M0.3 0v8L7.6 4z" fill="#9b999a"/></svg>
<div class="r" style="left:20px;top:409px;width:587px;height:1px;background:#4e4e4e;"></div>
<div class="r" style="left:606px;top:137px;width:1px;height:324px;background:#4e4e4e;"></div>
<div class="r" style="left:20px;top:460px;width:954px;height:1px;background:#4e4e4e;"></div>
<div class="r" style="left:607px;top:137px;width:366px;height:23px;background:#212121;border:1px solid #878787;border-radius:2px"></div>
<span class="t" id="t81" style="left:762.3px;top:140.89px;font-family:'Liberation Mono', monospace;font-size:11.67px;color:#e8e8e8;letter-spacing:-0.003px;">Hide FPU</span>
<svg class="r" style="left:960px;top:164px;" width="8" height="8" viewBox="0 0 8 8"><path d="M4 0.3L0 7.5h8z" fill="#9b999a"/></svg>
<div class="r" style="left:959px;top:176px;width:10px;height:125px;background:#3f3f3f;border-radius:5px"></div>
<div class="r" style="left:959px;top:176px;width:10px;height:24px;background:#757877;border-radius:5px"></div>
<svg class="r" style="left:960px;top:305px;" width="8" height="8" viewBox="0 0 8 8"><path d="M0 0.5h8L4 7.7z" fill="#9b999a"/></svg>
<svg class="r" style="left:611px;top:322px;" width="8" height="8" viewBox="0 0 8 8"><path d="M7.7 0v8L0.4 4z" fill="#9b999a"/></svg>
<div class="r" style="left:623px;top:321px;width:316px;height:10px;background:#3f3f3f;border-radius:5px"></div>
<div class="r" style="left:623px;top:321px;width:109px;height:10px;background:#757877;border-radius:5px"></div>
<svg class="r" style="left:943px;top:322px;" width="8" height="8" viewBox="0 0 8 8"><path d="M0.3 0v8L7.6 4z" fill="#9b999a"/></svg>
<div class="r" style="left:607px;top:335px;width:367px;height:1px;background:#4e4e4e;"></div>
<div class="r" style="left:607px;top:336px;width:168px;height:28px;background:#212121;border:1px solid #424242;border-radius:3px"></div>
<span class="t" id="t82" style="left:612.5px;top:343.19px;font-family:'Liberation Sans', sans-serif;font-size:11px;color:#e4e4e4;letter-spacing:-0.070px;">Padrão (x64 fastcall)</span>
<svg class="r" style="left:762px;top:348px;" width="9" height="5" viewBox="0 0 9 5"><path d="M0.3 0h8.4L4.5 4.6z" fill="#a8a8a8"/></svg>
<div class="r" style="left:778px;top:337px;width:101px;height:26px;background:#333333;border-radius:3px"></div>
<svg class="r" style="left:783px;top:348px;" width="8" height="5" viewBox="0 0 8 5"><path d="M0 0h8L4 4.4z" fill="#a8a8a8"/></svg>
<svg class="r" style="left:868px;top:348px;" width="8" height="5" viewBox="0 0 8 5"><path d="M0 4.6h8L4 0.2z" fill="#a8a8a8"/></svg>
<span class="t" id="t83" style="left:801.6px;top:343.19px;font-family:'Liberation Sans', sans-serif;font-size:11px;color:#e4e4e4;letter-spacing:0.000px;">5</span>
<div class="r" style="left:883px;top:341px;width:16px;height:16px;background:#222222;border:1px solid #6a6a6a;border-radius:3px"></div>
<span class="t" id="t84" style="left:904px;top:343.19px;font-family:'Liberation Sans', sans-serif;font-size:11px;color:#e4e4e4;letter-spacing:-0.296px;">Desbloqueado</span>
<svg class="r" style="left:959px;top:369px;" width="8" height="8" viewBox="0 0 8 8"><path d="M4 0.3L0 7.5h8z" fill="#9b999a"/></svg>
<div class="r" style="left:958px;top:381px;width:10px;height:62px;background:#757877;border-radius:5px"></div>
<svg class="r" style="left:959px;top:447px;" width="8" height="8" viewBox="0 0 8 8"><path d="M0 0.5h8L4 7.7z" fill="#9b999a"/></svg>
<div class="r" style="left:21px;top:462px;width:100px;height:26px;background:#404040;border-radius:3px 3px 0 0"></div>
<div class="r" style="left:21px;top:486px;width:100px;height:2px;background:#7c9ff4;"></div>
<svg class="r" style="left:31px;top:467.5px;" width="16" height="13" viewBox="0 0 16 13"><path d="M0.400 1.400h4.800v8.200H0.400z" fill="#e9b41c"/><path d="M0.400 1.400h1.300v8.200H0.400z" fill="#d8681a"/><rect x="1.500" y="3.400" width="2.400" height="3.800" fill="#3462c0"/><rect x="2.200" y="3.800" width="1" height="3" fill="#8fb4ee"/><rect x="5.200" y="0.300" width="10.400" height="9.700" rx="1" fill="#f4f4f4"/><g stroke="#aeb2b8" stroke-width="1.200"><path d="M7.500 0.600v9.200M10.300 0.600v9.200M13.100 0.600v9.200"/></g><circle cx="3" cy="10.500" r="1.800" fill="#0c0c0c"/><circle cx="13.200" cy="10.500" r="1.800" fill="#0c0c0c"/><circle cx="3" cy="10.500" r="0.800" fill="#f4f4f4"/><circle cx="13.200" cy="10.500" r="0.800" fill="#f4f4f4"/></svg>
<span class="t" id="t85" style="left:56.5px;top:467.19px;font-family:'Liberation Sans', sans-serif;font-size:11px;color:#7c9ff4;letter-spacing:-0.156px;">Despejo 1</span>
<div class="r" style="left:123px;top:462px;width:100px;height:25px;background:#2e2e2e;border-radius:3px 3px 0 0"></div>
<svg class="r" style="left:133px;top:467.5px;" width="16" height="13" viewBox="0 0 16 13"><path d="M0.400 1.400h4.800v8.200H0.400z" fill="#e9b41c"/><path d="M0.400 1.400h1.300v8.200H0.400z" fill="#d8681a"/><rect x="1.500" y="3.400" width="2.400" height="3.800" fill="#3462c0"/><rect x="2.200" y="3.800" width="1" height="3" fill="#8fb4ee"/><rect x="5.200" y="0.300" width="10.400" height="9.700" rx="1" fill="#f4f4f4"/><g stroke="#aeb2b8" stroke-width="1.200"><path d="M7.500 0.600v9.200M10.300 0.600v9.200M13.100 0.600v9.200"/></g><circle cx="3" cy="10.500" r="1.800" fill="#0c0c0c"/><circle cx="13.200" cy="10.500" r="1.800" fill="#0c0c0c"/><circle cx="3" cy="10.500" r="0.800" fill="#f4f4f4"/><circle cx="13.200" cy="10.500" r="0.800" fill="#f4f4f4"/></svg>
<span class="t" id="t86" style="left:158.5px;top:467.19px;font-family:'Liberation Sans', sans-serif;font-size:11px;color:#e4e4e4;letter-spacing:-0.156px;">Despejo 2</span>
<div class="r" style="left:225px;top:462px;width:100px;height:25px;background:#2e2e2e;border-radius:3px 3px 0 0"></div>
<svg class="r" style="left:235px;top:467.5px;" width="16" height="13" viewBox="0 0 16 13"><path d="M0.400 1.400h4.800v8.200H0.400z" fill="#e9b41c"/><path d="M0.400 1.400h1.300v8.200H0.400z" fill="#d8681a"/><rect x="1.500" y="3.400" width="2.400" height="3.800" fill="#3462c0"/><rect x="2.200" y="3.800" width="1" height="3" fill="#8fb4ee"/><rect x="5.200" y="0.300" width="10.400" height="9.700" rx="1" fill="#f4f4f4"/><g stroke="#aeb2b8" stroke-width="1.200"><path d="M7.500 0.600v9.200M10.300 0.600v9.200M13.100 0.600v9.200"/></g><circle cx="3" cy="10.500" r="1.800" fill="#0c0c0c"/><circle cx="13.200" cy="10.500" r="1.800" fill="#0c0c0c"/><circle cx="3" cy="10.500" r="0.800" fill="#f4f4f4"/><circle cx="13.200" cy="10.500" r="0.800" fill="#f4f4f4"/></svg>
<span class="t" id="t87" style="left:260.5px;top:467.19px;font-family:'Liberation Sans', sans-serif;font-size:11px;color:#e4e4e4;letter-spacing:-0.156px;">Despejo 3</span>
<div class="r" style="left:327px;top:462px;width:100px;height:25px;background:#2e2e2e;border-radius:3px 3px 0 0"></div>
<svg class="r" style="left:337px;top:467.5px;" width="16" height="13" viewBox="0 0 16 13"><path d="M0.400 1.400h4.800v8.200H0.400z" fill="#e9b41c"/><path d="M0.400 1.400h1.300v8.200H0.400z" fill="#d8681a"/><rect x="1.500" y="3.400" width="2.400" height="3.800" fill="#3462c0"/><rect x="2.200" y="3.800" width="1" height="3" fill="#8fb4ee"/><rect x="5.200" y="0.300" width="10.400" height="9.700" rx="1" fill="#f4f4f4"/><g stroke="#aeb2b8" stroke-width="1.200"><path d="M7.500 0.600v9.200M10.300 0.600v9.200M13.100 0.600v9.200"/></g><circle cx="3" cy="10.500" r="1.800" fill="#0c0c0c"/><circle cx="13.200" cy="10.500" r="1.800" fill="#0c0c0c"/><circle cx="3" cy="10.500" r="0.800" fill="#f4f4f4"/><circle cx="13.200" cy="10.500" r="0.800" fill="#f4f4f4"/></svg>
<span class="t" id="t88" style="left:362.5px;top:467.19px;font-family:'Liberation Sans', sans-serif;font-size:11px;color:#e4e4e4;letter-spacing:-0.156px;">Despejo 4</span>
<div class="r" style="left:429px;top:462px;width:100px;height:25px;background:#2e2e2e;border-radius:3px 3px 0 0"></div>
<svg class="r" style="left:439px;top:467.5px;" width="16" height="13" viewBox="0 0 16 13"><path d="M0.400 1.400h4.800v8.200H0.400z" fill="#e9b41c"/><path d="M0.400 1.400h1.300v8.200H0.400z" fill="#d8681a"/><rect x="1.500" y="3.400" width="2.400" height="3.800" fill="#3462c0"/><rect x="2.200" y="3.800" width="1" height="3" fill="#8fb4ee"/><rect x="5.200" y="0.300" width="10.400" height="9.700" rx="1" fill="#f4f4f4"/><g stroke="#aeb2b8" stroke-width="1.200"><path d="M7.500 0.600v9.200M10.300 0.600v9.200M13.100 0.600v9.200"/></g><circle cx="3" cy="10.500" r="1.800" fill="#0c0c0c"/><circle cx="13.200" cy="10.500" r="1.800" fill="#0c0c0c"/><circle cx="3" cy="10.500" r="0.800" fill="#f4f4f4"/><circle cx="13.200" cy="10.500" r="0.800" fill="#f4f4f4"/></svg>
<span class="t" id="t89" style="left:464.5px;top:467.19px;font-family:'Liberation Sans', sans-serif;font-size:11px;color:#e4e4e4;letter-spacing:-0.156px;">Despejo 5</span>
<div class="r" style="left:531px;top:462px;width:35px;height:25px;background:#2e2e2e;border-radius:3px 0 0 0"></div>
<svg class="r" style="left:541px;top:466.5px;" width="16" height="15" viewBox="0 0 16 15"><path d="M1.4 1.2l3.2 2.2h6.8l3.2-2.2 0.6 6.2c0 4-3 6.8-7.2 6.8S0.8 11.400.8 7.400z" fill="#d98a3a"/><path d="M1.400 1.200L4.600 3.400h6.800l3.200-2.200 0.600 6.200c0 4-3 6.800-7.200 6.800S0.800 11.400 0.800 7.400z" fill="#e0a050"/><path d="M2 2.200l2 1.800-1.800 2zM14 2.200l-2 1.800 1.800 2z" fill="#b3541e"/><ellipse cx="8" cy="10.600" rx="4" ry="3.400" fill="#fbf0dc"/><circle cx="5.200" cy="7.400" r="1" fill="#2a2a5a"/><circle cx="10.800" cy="7.400" r="1" fill="#2a2a5a"/><ellipse cx="8" cy="9.600" rx="1.100" ry="0.800" fill="#3a2a2a"/><path d="M6.800 11.200h2.400v1.600H6.800z" fill="#8a2a3a"/></svg>
<div class="r" style="left:566px;top:463px;width:14px;height:23px;background:#1f1f1f;border:1px solid #464646;border-radius:3px"></div>
<svg class="r" style="left:570px;top:470.5px;" width="5" height="8" viewBox="0 0 5 8"><path d="M5 0L0 4l5 4z" fill="#9c9c9c"/></svg>
<div class="r" style="left:581px;top:463px;width:14px;height:23px;background:#1f1f1f;border:1px solid #464646;border-radius:3px"></div>
<svg class="r" style="left:586px;top:470.5px;" width="5" height="8" viewBox="0 0 5 8"><path d="M0 0l5 4-5 4z" fill="#f0f0f0"/></svg>
<div class="r" style="left:22px;top:490px;width:554px;height:13px;background:#404040;"></div>
<div class="r" style="left:22px;top:503px;width:554px;height:2px;background:#787878;"></div>
<div class="r" style="left:140px;top:490px;width:2px;height:15px;background:#787878;"></div>
<div class="r" style="left:141px;top:505px;width:1px;height:75px;background:#787878;"></div>
<div class="r" style="left:477px;top:490px;width:2px;height:15px;background:#787878;"></div>
<div class="r" style="left:478px;top:505px;width:1px;height:75px;background:#787878;"></div>
<span class="t" id="t90" style="left:26.5px;top:489.89px;font-family:'Liberation Mono', monospace;font-size:11.67px;color:#e8e8e8;letter-spacing:-0.003px;">Endereço</span>
<span class="t" id="t91" style="left:147px;top:489.89px;font-family:'Liberation Mono', monospace;font-size:11.67px;color:#e8e8e8;letter-spacing:-0.003px;">Hexadecimal</span>
<span class="t" id="t92" style="left:483.4px;top:489.89px;font-family:'Liberation Mono', monospace;font-size:11.67px;color:#e8e8e8;letter-spacing:-0.003px;">ASCII</span>
<svg class="r" style="left:581px;top:494px;" width="8" height="8" viewBox="0 0 8 8"><path d="M4 0.3L0 7.5h8z" fill="#9b999a"/></svg>
<div class="r" style="left:580px;top:506px;width:10px;height:58px;background:#757877;border-radius:5px"></div>
<svg class="r" style="left:581px;top:568px;" width="8" height="8" viewBox="0 0 8 8"><path d="M0 0.5h8L4 7.7z" fill="#9b999a"/></svg>
<svg class="r" style="left:26px;top:585px;" width="8" height="8" viewBox="0 0 8 8"><path d="M7.7 0v8L0.4 4z" fill="#9b999a"/></svg>
<div class="r" style="left:38px;top:584px;width:522px;height:10px;background:#3f3f3f;border-radius:5px"></div>
<div class="r" style="left:38px;top:584px;width:473px;height:10px;background:#757877;border-radius:5px"></div>
<svg class="r" style="left:565px;top:585px;" width="8" height="8" viewBox="0 0 8 8"><path d="M0.3 0v8L7.6 4z" fill="#9b999a"/></svg>
<div class="r" style="left:596px;top:461px;width:1px;height:139px;background:#4e4e4e;"></div>
<div class="r" style="left:717px;top:462px;width:1px;height:119px;background:#5c5c5c;"></div>
<div class="r" style="left:839px;top:462px;width:1px;height:119px;background:#5c5c5c;"></div>
<svg class="r" style="left:959px;top:466px;" width="8" height="8" viewBox="0 0 8 8"><path d="M4 0.3L0 7.5h8z" fill="#9b999a"/></svg>
<div class="r" style="left:958px;top:478px;width:10px;height:87px;background:#757877;border-radius:5px"></div>
<svg class="r" style="left:959px;top:569px;" width="8" height="8" viewBox="0 0 8 8"><path d="M0 0.5h8L4 7.7z" fill="#9b999a"/></svg>
<svg class="r" style="left:602px;top:586px;" width="8" height="8" viewBox="0 0 8 8"><path d="M7.7 0v8L0.4 4z" fill="#9b999a"/></svg>
<div class="r" style="left:614px;top:585px;width:324px;height:10px;background:#3f3f3f;border-radius:5px"></div>
<div class="r" style="left:614px;top:585px;width:83px;height:10px;background:#757877;border-radius:5px"></div>
<svg class="r" style="left:943px;top:586px;" width="8" height="8" viewBox="0 0 8 8"><path d="M0.3 0v8L7.6 4z" fill="#9b999a"/></svg>
<span class="t" id="t93" style="left:20px;top:608.69px;font-family:'Liberation Sans', sans-serif;font-size:11px;color:#e4e4e4;letter-spacing:-0.438px;">Comando:</span>
<div class="r" style="left:73px;top:607px;width:794px;height:18px;background:#333333;border-radius:3px"></div>
<span class="t" id="t94" style="left:75.7px;top:608.89px;font-family:'Liberation Mono', monospace;font-size:11.67px;color:#e8e8e8;letter-spacing:-0.003px;">bp AmsiScanBuffer</span>
<div class="r" style="left:869px;top:602px;width:104px;height:28px;background:#212121;border:1px solid #424242;border-radius:3px"></div>
<span class="t" id="t95" style="left:874.7px;top:609.19px;font-family:'Liberation Sans', sans-serif;font-size:11px;color:#e4e4e4;letter-spacing:-0.437px;">Padrão</span>
<svg class="r" style="left:960px;top:614px;" width="9" height="5" viewBox="0 0 9 5"><path d="M0.3 0h8.400L4.500 4.600z" fill="#a8a8a8"/></svg>
<span class="t" id="t96" style="left:31px;top:635.59px;font-family:'Liberation Sans', sans-serif;font-size:11px;color:#d2281a;letter-spacing:-0.349px;">Finalizado</span>
<span class="t" id="t97" style="left:94px;top:635.59px;font-family:'Liberation Sans', sans-serif;font-size:11px;color:#e4e4e4;letter-spacing:-0.163px;">Depuração interrompida!</span>
<span class="t" id="t98" style="left:759px;top:635.59px;font-family:'Liberation Sans', sans-serif;font-size:11px;color:#e4e4e4;letter-spacing:-0.048px;">Tempo desperdiçado depurando: 0:13:34:10</span>
<svg class="r" style="left:865px;top:630px;" width="15" height="23" viewBox="0 0 13 20"><path d="M0.5 0.700V16.200l3.600-3.400 2.500 5.800 2.300-1-2.500-5.600h5z" fill="#fff" stroke="#111" stroke-width="0.900"/></svg>
</body></html>
